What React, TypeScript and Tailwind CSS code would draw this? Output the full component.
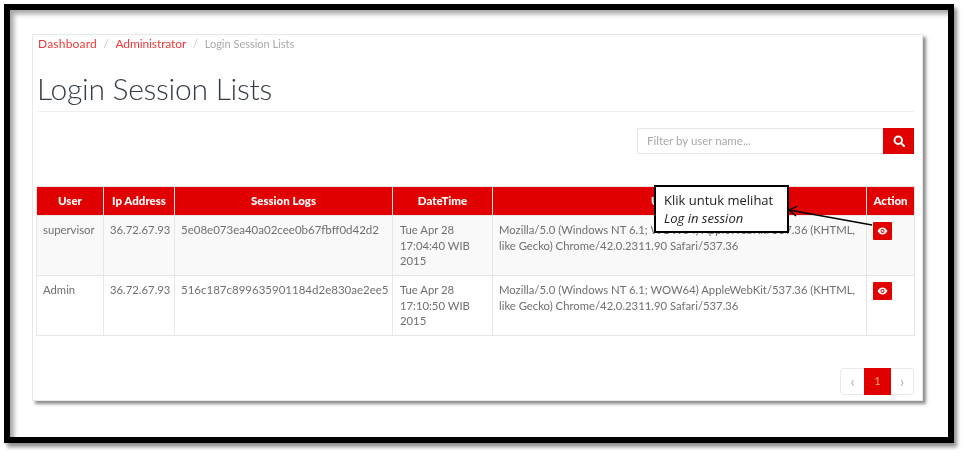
import React from "react";

function Eye() {
  return (
    <svg width="11" height="8" viewBox="0 0 22 16" fill="none">
      <path d="M1 8C4 3 7 1 11 1s7 2 10 7c-3 5-6 7-10 7S4 13 1 8Z" fill="#fff" />
      <circle cx="11" cy="8" r="4" fill="#e00000" />
      <circle cx="11" cy="8" r="2.2" fill="#fff" />
    </svg>
  );
}

const rows = [
  {
    user: "supervisor",
    ip: "36.72.67.93",
    log: "5e08e073ea40a02cee0b67fbff0d42d2",
    date: "Tue Apr 28 17:04:40 WIB 2015",
    bg: "bg-[#f9f9f9]",
  },
  {
    user: "Admin",
    ip: "36.72.67.93",
    log: "516c187c899635901184d2e830ae2ee5",
    date: "Tue Apr 28 17:10:50 WIB 2015",
    bg: "bg-white",
  },
];

const th = "border border-[#e6e6e6] text-center text-[11.5px] font-black text-white p-0 h-[29px]";
const td = "border border-[#e6e6e6] align-top text-[11.3px] leading-[15.5px] text-[#6f6f6f] pl-[6px] pr-[5px] pt-[6px]";

export default function App() {
  return (
    <div className="w-[967px] h-[456px] bg-white pt-1 pl-1 overflow-hidden font-['Lato','Liberation_Sans',sans-serif] blur-[0.45px]">
      <div className="w-[950px] h-[439px] border-[6px] border-black bg-white shadow-[3px_4px_4px_rgba(0,0,0,0.45)]">
        <div className="w-full h-full pt-6 pl-[22px] shadow-[inset_5px_5px_5px_-1px_rgba(0,0,0,0.35)]">
          <div className="relative w-[891px] h-[367px] bg-white border border-[#e8e8e8] shadow-[3px_3px_3px_rgba(0,0,0,0.45)] pl-1 pr-2">
            <nav className="flex h-[18px] items-center gap-[6.5px] pl-[1px] text-[12px] text-[#a9a9a9]">
              <span className="text-[#e8393c] tracking-[0.2px]">Dashboard</span>
              <span className="text-[#c8c8c8]">/</span>
              <span className="text-[#e8393c] tracking-[-0.1px]">Administrator</span>
              <span className="text-[#c8c8c8]">/</span>
              <span className="text-[11px]">Login Session Lists</span>
            </nav>
            <h1 className="mt-[17px] h-[42px] border-b border-[#eeeeee] text-[30px] leading-[36px] font-light text-[#333b44] tracking-[-0.25px]">
              Login Session Lists
            </h1>
            <div className="mt-[16px] flex justify-end">
              <div className="flex h-[26px] w-[277px] border border-[#e6e6e6] border-r-0 rounded-l-[2px]">
                <div className="flex-1 pl-[9px] text-[11.5px] leading-[24px] text-[#a8a8a8]">Filter by user name...</div>
                <button className="flex w-[31px] -my-px items-center justify-center bg-[#e00000]">
                  <svg width="12" height="12" viewBox="0 0 24 24" fill="none" stroke="#fff" strokeWidth="4" strokeLinecap="round">
                    <circle cx="10.5" cy="10.5" r="7.5" />
                    <path d="M16.5 16.5 22 22" />
                  </svg>
                </button>
              </div>
            </div>
            <table className="mt-[32px] -ml-px w-[878px] table-fixed border-collapse">
              <colgroup>
                <col className="w-[67px]" />
                <col className="w-[71px]" />
                <col className="w-[218px]" />
                <col className="w-[100px]" />
                <col className="w-[374px]" />
                <col className="w-[48px]" />
              </colgroup>
              <thead>
                <tr className="bg-[#e00000]">
                  <th className={th}>User</th>
                  <th className={th}>Ip Address</th>
                  <th className={th}>Session Logs</th>
                  <th className={th}>DateTime</th>
                  <th className={th}>User Agent</th>
                  <th className={th}>Action</th>
                </tr>
              </thead>
              <tbody>
                {rows.map((r) => (
                  <tr key={r.user} className={`${r.bg} h-[60px]`}>
                    <td className={td}>{r.user}</td>
                    <td className={`${td} whitespace-nowrap`}>{r.ip}</td>
                    <td className={`${td} whitespace-nowrap text-[11.5px]`}>{r.log}</td>
                    <td className={`${td} pl-[7px] pr-[12px]`}>{r.date}</td>
                    <td className={td}>
                      Mozilla/5.0 (Windows NT 6.1; WOW64) AppleWebKit/537.36 (KHTML, like Gecko) Chrome/42.0.2311.90 Safari/537.36
                    </td>
                    <td className={td}>
                      <span className="flex h-[18px] w-[19px] items-center justify-center rounded-[1px] bg-[#e00000]">
                        <Eye />
                      </span>
                    </td>
                  </tr>
                ))}
              </tbody>
            </table>
            <div className="mt-[32px] flex justify-end">
              <div className="flex h-[27px] w-[74px] rounded-[3px] border border-[#eaeaea] text-[11px] text-[#aaaaaa]">
                <span className="flex w-[23px] items-center justify-center text-[15px] leading-none">‹</span>
                <span className="-my-px flex w-[27px] items-center justify-center bg-[#e00000] text-[#f5b060]">1</span>
                <span className="flex flex-1 items-center justify-center text-[15px] leading-none">›</span>
              </div>
            </div>

            <div className="absolute left-[621px] top-[150px] h-[48px] w-[135px] border-2 border-black bg-white pl-[8px] pt-[4px] font-['Open_Sans','Noto_Sans',sans-serif] text-[13px] leading-[18px] text-[#222]">
              <div>Klik untuk melihat</div>
              <div className="italic">Log in session</div>
            </div>
            <svg className="absolute left-[752px] top-[165px]" width="90" height="30" viewBox="0 0 90 30" fill="none" stroke="#000" strokeWidth="1.3">
              <path d="M4 10 87 25" />
              <path d="M13 6 4 10 11 16" />
            </svg>
          </div>
        </div>
      </div>
    </div>
  );
}
